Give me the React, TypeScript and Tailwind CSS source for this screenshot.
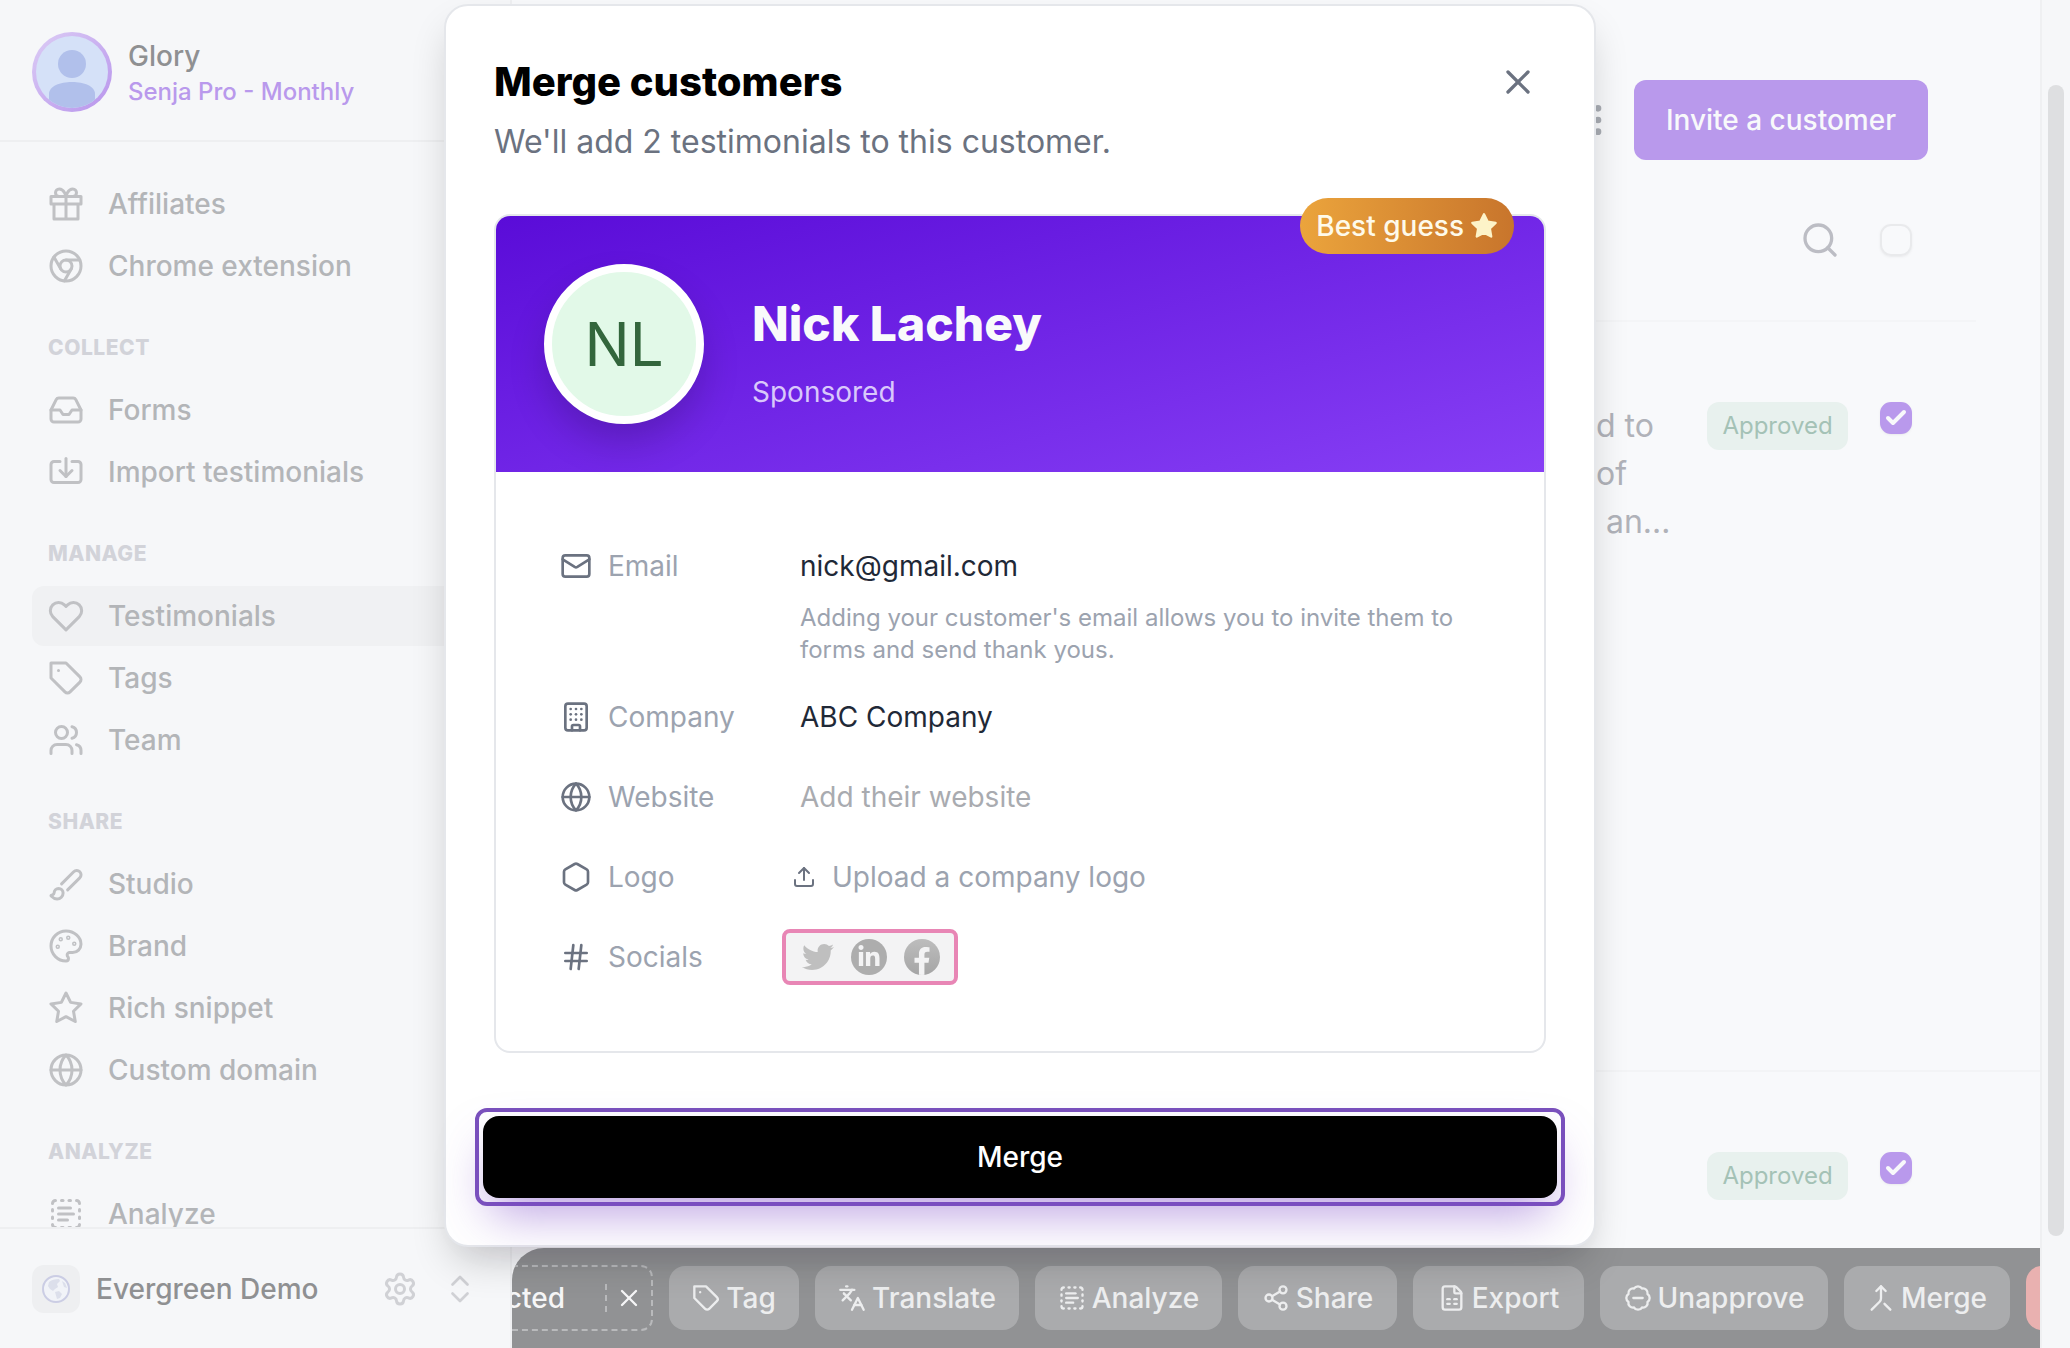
import { useState, type ReactNode } from "react";
import {
  BadgeMinus,
  Building,
  Check,
  ChevronsUpDown,
  FileSpreadsheet,
  Globe,
  Hash,
  Hexagon,
  Import,
  Inbox,
  Languages,
  Mail,
  Merge,
  MoreVertical,
  Search,
  Settings,
  Share2,
  TextSelect,
  Upload,
  Users,
  X,
} from "lucide-react";
import { FaFacebookF, FaLinkedinIn, FaTwitter } from "react-icons/fa";

interface IconProps {
  className?: string;
  strokeWidth?: number;
}

function Glyph({ className, strokeWidth = 2, children }: IconProps & { children: ReactNode }) {
  return (
    <svg
      viewBox="0 0 24 24"
      fill="none"
      stroke="currentColor"
      strokeWidth={strokeWidth}
      strokeLinecap="round"
      strokeLinejoin="round"
      className={className}
      aria-hidden="true"
    >
      {children}
    </svg>
  );
}

function GiftIcon(props: IconProps) {
  return (
    <Glyph {...props}>
      <path d="M20 12v10H4V12M2 7h20v5H2zM12 22V7" />
      <path d="M12 7H7.5a2.5 2.5 0 0 1 0-5C11 2 12 7 12 7zM12 7h4.5a2.5 2.5 0 0 0 0-5C13 2 12 7 12 7z" />
    </Glyph>
  );
}

function ChromeIcon(props: IconProps) {
  return (
    <Glyph {...props}>
      <circle cx="12" cy="12" r="10" />
      <circle cx="12" cy="12" r="4" />
      <path d="M21.17 8H12M3.95 6.06 8.54 14M10.88 21.94 15.46 14" />
    </Glyph>
  );
}

function HeartIcon(props: IconProps) {
  return (
    <Glyph {...props}>
      <path d="M20.84 4.61a5.5 5.5 0 0 0-7.78 0L12 5.67l-1.06-1.06a5.5 5.5 0 0 0-7.78 7.78L12 21.23l8.84-8.84a5.5 5.5 0 0 0 0-7.78z" />
    </Glyph>
  );
}

function TagIcon(props: IconProps) {
  return (
    <Glyph {...props}>
      <path d="M12 2H2v10l9.29 9.29c.94.94 2.48.94 3.42 0l6.58-6.58c.94-.94.94-2.48 0-3.42L12 2ZM7 7h.01" />
    </Glyph>
  );
}

function BrushIcon(props: IconProps) {
  return (
    <Glyph {...props}>
      <path d="m9.06 11.9 8.07-8.06a2.85 2.85 0 1 1 4.03 4.03l-8.06 8.08" />
      <path d="M7.07 14.94c-1.66 0-3 1.35-3 3.02 0 1.33-2.5 1.52-2 2.02 1.08 1.1 2.49 2.02 4 2.02 2.2 0 4-1.8 4-4.04a3.01 3.01 0 0 0-3-3.02z" />
    </Glyph>
  );
}

function PaletteIcon(props: IconProps) {
  return (
    <Glyph {...props}>
      <circle cx="13.5" cy="6.5" r=".5" />
      <circle cx="17.5" cy="10.5" r=".5" />
      <circle cx="8.5" cy="7.5" r=".5" />
      <circle cx="6.5" cy="12.5" r=".5" />
      <path d="M12 2C6.5 2 2 6.5 2 12s4.5 10 10 10c.926 0 1.648-.746 1.648-1.688 0-.437-.18-.835-.437-1.125-.29-.289-.438-.652-.438-1.125a1.64 1.64 0 0 1 1.668-1.668h1.996c3.051 0 5.555-2.503 5.555-5.554C21.965 6.012 17.461 2 12 2z" />
    </Glyph>
  );
}

function StarIcon({ className, strokeWidth, filled = false }: IconProps & { filled?: boolean }) {
  return (
    <Glyph className={className} strokeWidth={strokeWidth}>
      <path
        fill={filled ? "currentColor" : "none"}
        d="m12 2 3.09 6.26 6.91 1.01-5 4.87 1.18 6.88L12 17.77l-6.18 3.25L7 14.14 2 9.27l6.91-1.01L12 2z"
      />
    </Glyph>
  );
}

type IconType = (props: IconProps) => ReactNode;

interface NavGroup {
  title?: string;
  items: { label: string; icon: IconType | typeof Globe; active?: boolean }[];
}

const navGroups: NavGroup[] = [
  {
    items: [
      { label: "Affiliates", icon: GiftIcon },
      { label: "Chrome extension", icon: ChromeIcon },
    ],
  },
  {
    title: "COLLECT",
    items: [
      { label: "Forms", icon: Inbox },
      { label: "Import testimonials", icon: Import },
    ],
  },
  {
    title: "MANAGE",
    items: [
      { label: "Testimonials", icon: HeartIcon, active: true },
      { label: "Tags", icon: TagIcon },
      { label: "Team", icon: Users },
    ],
  },
  {
    title: "SHARE",
    items: [
      { label: "Studio", icon: BrushIcon },
      { label: "Brand", icon: PaletteIcon },
      { label: "Rich snippet", icon: StarIcon },
      { label: "Custom domain", icon: Globe },
    ],
  },
  {
    title: "ANALYZE",
    items: [{ label: "Analyze", icon: TextSelect }],
  },
];

const bulkActions = [
  { label: "Tag", icon: TagIcon, width: "w-[130px]" },
  { label: "Translate", icon: Languages, width: "w-[204px]" },
  { label: "Analyze", icon: TextSelect, width: "w-[187px]" },
  { label: "Share", icon: Share2, width: "w-[159px]" },
  { label: "Export", icon: FileSpreadsheet, width: "w-[171px]" },
  { label: "Unapprove", icon: BadgeMinus, width: "w-[228px]" },
  { label: "Merge", icon: Merge, width: "w-[166px]" },
];

function Sidebar() {
  return (
    <aside className="flex w-[512px] shrink-0 flex-col border-r-2 border-[#eff0f2] bg-[#f6f7f9]">
      <div className="flex items-center gap-4 border-b-2 border-[#eeeff1] px-8 pt-8 pb-7">
        <svg viewBox="0 0 80 80" className="size-20" aria-hidden="true">
          <defs>
            <linearGradient id="ring" x1="0" y1="0" x2="1" y2="1">
              <stop offset="0" stopColor="#dccdf5" />
              <stop offset="1" stopColor="#b894ec" />
            </linearGradient>
            <clipPath id="face">
              <circle cx="40" cy="40" r="36" />
            </clipPath>
          </defs>
          <circle cx="40" cy="40" r="40" fill="url(#ring)" />
          <circle cx="40" cy="40" r="36" fill="#d5e1f8" />
          <g clipPath="url(#face)" fill="#b1c0eb">
            <circle cx="40" cy="32" r="14" />
            <path d="M17 80V62c0-8 11-12 23-12s23 4 23 12v18z" />
          </g>
        </svg>
        <div className="pt-1">
          <p className="text-[28px] leading-9 font-medium text-[#8f9092]">Glory</p>
          <p className="text-2xl leading-9 font-medium text-[#b999ec]">Senja Pro - Monthly</p>
        </div>
      </div>

      <nav className="min-h-0 flex-1 overflow-hidden px-8 pt-8">
        {navGroups.map((group, i) => (
          <div key={i}>
            {group.title && (
              <h2 className="px-4 pt-9 pb-4 text-[21px] leading-8 font-extrabold tracking-wide text-[#d2d3d9]">
                {group.title}
              </h2>
            )}
            <ul className="flex flex-col gap-0.5">
              {group.items.map((item) => (
                <li key={item.label}>
                  <a
                    href="#"
                    className={`flex h-[60px] items-center gap-6 rounded-xl px-4 text-[28px] font-medium text-[#b3b5b8] ${
                      item.active ? "bg-[#f0f1f3]" : ""
                    }`}
                  >
                    <item.icon className="size-9 text-[#c0c1c4]" strokeWidth={2} />
                    {item.label}
                  </a>
                </li>
              ))}
            </ul>
          </div>
        ))}
      </nav>

      <div className="flex h-[121px] shrink-0 items-center border-t-2 border-[#eeeff1] px-8">
        <div className="flex size-12 items-center justify-center rounded-xl bg-[#eeeff1]">
          <svg viewBox="0 0 28 28" className="size-7" aria-hidden="true">
            <circle cx="14" cy="14" r="13" fill="#f1f3f8" stroke="#cbcde4" strokeWidth="2" />
            <path
              fill="#dcdfeb"
              d="M7 7c2-2 6-3 10-3l1 2-3 3 1 3-3 2-2 2-3-2-2-3zM13 17l4-1 3 3-2 4-3 1zM20 6l3 2 2 5-3-1z"
            />
          </svg>
        </div>
        <p className="ml-4 flex-1 text-[28px] font-medium whitespace-nowrap text-[#8f9092]">Evergreen Demo</p>
        <button aria-label="Settings" className="mr-6 text-[#d0d1d5]">
          <Settings className="size-9" strokeWidth={2} />
        </button>
        <button aria-label="Switch project" className="text-[#d0d1d5]">
          <ChevronsUpDown className="size-9" strokeWidth={1.8} />
        </button>
      </div>
    </aside>
  );
}

function SelectBox({ label, defaultChecked = false }: { label: string; defaultChecked?: boolean }) {
  return (
    <span className="grid size-8 shrink-0 place-items-center">
      <input
        type="checkbox"
        aria-label={label}
        defaultChecked={defaultChecked}
        className="col-start-1 row-start-1 size-8 appearance-none rounded-[11px] border-2 border-[#e9eaec] shadow-sm shadow-black/5 checked:border-[#b999ec] checked:bg-[#b999ec]"
      />
      {defaultChecked && (
        <Check className="pointer-events-none col-start-1 row-start-1 size-6 text-[#f8f9fb]" strokeWidth={4} />
      )}
    </span>
  );
}

function ApprovedBadge() {
  return (
    <span className="flex h-12 w-[141px] items-center justify-center rounded-xl bg-[#e8f1ee] text-2xl text-[#a4c2b6]">
      Approved
    </span>
  );
}

function BulkBar() {
  return (
    <div className="flex h-[100px] shrink-0 items-center gap-4 overflow-hidden rounded-tl-[32px] bg-[#919294]">
      <div className="flex h-[66px] w-[141px] shrink-0 items-center justify-end overflow-hidden rounded-r-xl border-2 border-l-0 border-dashed border-[#b9babc] text-[28px] font-medium whitespace-nowrap text-[#f6f6f7]">
        <span className="pr-10">selected</span>
        <button
          aria-label="Clear selection"
          className="flex h-7 items-center border-l-2 border-dashed border-[#b9babc] px-2"
        >
          <X className="size-7" strokeWidth={2} />
        </button>
      </div>
      {bulkActions.map((action) => (
        <button
          key={action.label}
          className={`flex h-16 shrink-0 items-center justify-center gap-1.5 rounded-2xl bg-[#aaabad] text-[28px] font-medium text-[#edeeef] ${action.width}`}
        >
          <action.icon className="size-7" strokeWidth={2} />
          {action.label}
        </button>
      ))}
      <button aria-label="Delete" className="h-16 w-40 shrink-0 rounded-2xl bg-[#e9b1b0]" />
    </div>
  );
}

function CustomersPage() {
  return (
    <main className="flex min-w-0 flex-1 flex-col bg-[#f8f9fb]">
      <div className="min-h-0 flex-1 overflow-hidden">
        <header className="mr-16 flex flex-col items-end border-b-2 border-[#f4f5f7] pr-12 pb-[60px]">
          <div className="mt-20 flex items-center">
            <button aria-label="More" className="mr-4 text-[#a9adb4]">
              <MoreVertical className="size-10" strokeWidth={2} />
            </button>
            <button className="h-20 rounded-xl bg-[#b999ec] px-8 text-[28px] font-medium text-[#f8f9fb]">
              Invite a customer
            </button>
          </div>
          <div className="mt-[60px] mr-4 flex items-center gap-10">
            <button aria-label="Search" className="text-[#bcbdc4]">
              <Search className="size-10" strokeWidth={2} />
            </button>
            <SelectBox label="Select all" />
          </div>
        </header>

        <section className="flex min-h-[750px] items-start justify-end border-b-2 border-[#f3f4f6] pt-20 pr-32">
          <div className="mr-8 w-[97px] text-[32px] leading-[48px] whitespace-nowrap text-[#b0b2b9]">
            <p className="pl-[18px]">d to</p>
            <p className="pl-[18px]">of</p>
            <p>n an…</p>
          </div>
          <ApprovedBadge />
          <div className="ml-8">
            <SelectBox label="Select testimonial" defaultChecked />
          </div>
        </section>

        <section className="flex items-start justify-end gap-8 pt-20 pr-32">
          <ApprovedBadge />
          <SelectBox label="Select second testimonial" defaultChecked />
        </section>
      </div>
      <BulkBar />
    </main>
  );
}

function DetailLabel({ icon: Icon, text, htmlFor }: { icon: typeof Globe; text: string; htmlFor?: string }) {
  const Tag = htmlFor ? "label" : "span";

  return (
    <Tag htmlFor={htmlFor} className="flex h-[60px] w-60 shrink-0 items-center gap-4 text-[#9ca3af]">
      <Icon className="size-8 text-[#6b7280]" strokeWidth={2} />
      {text}
    </Tag>
  );
}

function MergeModal() {
  const [email, setEmail] = useState("nick@gmail.com");
  const [company, setCompany] = useState("ABC Company");
  const [website, setWebsite] = useState("");

  return (
    <div
      role="dialog"
      aria-label="Merge customers"
      className="w-full max-w-[1152px] rounded-3xl border-2 border-[#e5e7eb] bg-white px-12 pt-[52px] pb-[39px] shadow-[0_20px_40px_-8px_rgba(0,0,0,0.2)]"
    >
      <div className="flex items-center justify-between">
        <h1 className="text-[40px] leading-[48px] font-extrabold text-black">Merge customers</h1>
        <button aria-label="Close" className="mr-2 text-[#6b7280]">
          <X className="size-10" strokeWidth={2} />
        </button>
      </div>
      <p className="mt-4 text-[32px] leading-10 text-[#6b7280]">We'll add 2 testimonials to this customer.</p>

      {/* Customer card */}
      <div className="relative mt-[52px] rounded-2xl border-2 border-[#e5e7eb]">
        <span className="absolute -top-[18px] right-[30px] flex h-14 items-center gap-1.5 rounded-full bg-linear-to-r from-[#eba43c] to-[#c8752c] px-4 text-[28px] font-medium text-[#fefaea]">
          Best guess
          <StarIcon filled className="size-7 text-[#fdf3c8]" />
        </span>

        <div className="flex items-center gap-12 rounded-t-[14px] bg-[linear-gradient(165deg,#5a0cd8,#873ff5)] p-12">
          <div className="flex size-40 items-center justify-center rounded-full border-8 border-white bg-[#e2f9e8] text-[60px] text-[#33663c] shadow-[0_20px_40px_-4px_rgba(0,0,0,0.2)]">
            NL
          </div>
          <div className="pt-4">
            <h2 className="text-5xl leading-[64px] font-extrabold text-[#f9fafb]">Nick Lachey</h2>
            <p className="mt-4 text-[28px] leading-10 text-[#d9c8fb]">Sponsored</p>
          </div>
        </div>

        <div className="px-16 pt-16 pb-[54px] text-[28px]">
          <div className="mb-[11px] flex">
            <DetailLabel icon={Mail} text="Email" htmlFor="email" />
            <div className="flex-1">
              <input
                id="email"
                type="email"
                value={email}
                onChange={(e) => setEmail(e.target.value)}
                className="h-[60px] w-full text-[#1f2937] outline-none"
              />
              <p className="mt-1.5 max-w-[660px] text-2xl leading-8 text-[#9ca3af]">
                Adding your customer's email allows you to invite them to forms and send thank yous.
              </p>
            </div>
          </div>
          <div className="flex h-20 items-center">
            <DetailLabel icon={Building} text="Company" htmlFor="company" />
            <input
              id="company"
              value={company}
              onChange={(e) => setCompany(e.target.value)}
              className="h-[60px] flex-1 text-[#1f2937] outline-none"
            />
          </div>
          <div className="flex h-20 items-center">
            <DetailLabel icon={Globe} text="Website" htmlFor="website" />
            <input
              id="website"
              value={website}
              placeholder="Add their website"
              onChange={(e) => setWebsite(e.target.value)}
              className="h-[60px] flex-1 outline-none placeholder:text-[#a9abb0]"
            />
          </div>
          <div className="flex h-20 items-center">
            <DetailLabel icon={Hexagon} text="Logo" htmlFor="logo" />
            <button id="logo" className="-ml-2 flex items-center gap-4 text-[#9ca3af]">
              <Upload className="size-6 text-[#6b7280]" strokeWidth={2} />
              Upload a company logo
            </button>
          </div>
          <div className="flex h-20 items-center">
            <DetailLabel icon={Hash} text="Socials" />
            <div className="-ml-[18px] flex h-14 w-44 items-center gap-[17px] rounded-lg border-4 border-[#e886b5] bg-[#f3f3f4] pl-4">
              <button aria-label="Twitter">
                <FaTwitter className="size-8 text-[#bfbfbf]" />
              </button>
              <button
                aria-label="LinkedIn"
                className="flex size-9 items-center justify-center rounded-full bg-[#adadad] text-[#f3f3f4]"
              >
                <FaLinkedinIn className="size-6" />
              </button>
              <button
                aria-label="Facebook"
                className="flex size-9 items-end justify-center overflow-hidden rounded-full bg-linear-to-b from-[#bdbdbd] to-[#a5a5a5] text-[#f3f3f4]"
              >
                <FaFacebookF className="size-7" />
              </button>
            </div>
          </div>
        </div>
      </div>

      <div className="-mx-[19px] mt-[55px] rounded-xl border-4 border-[#7a51bd] p-1">
        <button className="h-[82px] w-full rounded-2xl bg-black text-[28px] font-medium text-white shadow-[0_24px_48px_-8px_rgba(122,70,200,0.5)]">
          Merge
        </button>
      </div>
    </div>
  );
}

export default function App() {
  return (
    <div className="relative flex h-screen overflow-hidden font-['Inter',sans-serif]">
      <Sidebar />
      <CustomersPage />

      {/* Scroll track */}
      <div className="flex w-[30px] shrink-0 flex-col border-l-2 border-[#eff0f2] bg-[#f6f7f9] px-1.5 pt-[85px] pb-28">
        <div className="w-4 flex-1 rounded-full bg-[#dedfe1]" />
      </div>

      <div className="absolute inset-y-0 right-[30px] left-0 flex items-start justify-center pt-1">
        <MergeModal />
      </div>
    </div>
  );
}
